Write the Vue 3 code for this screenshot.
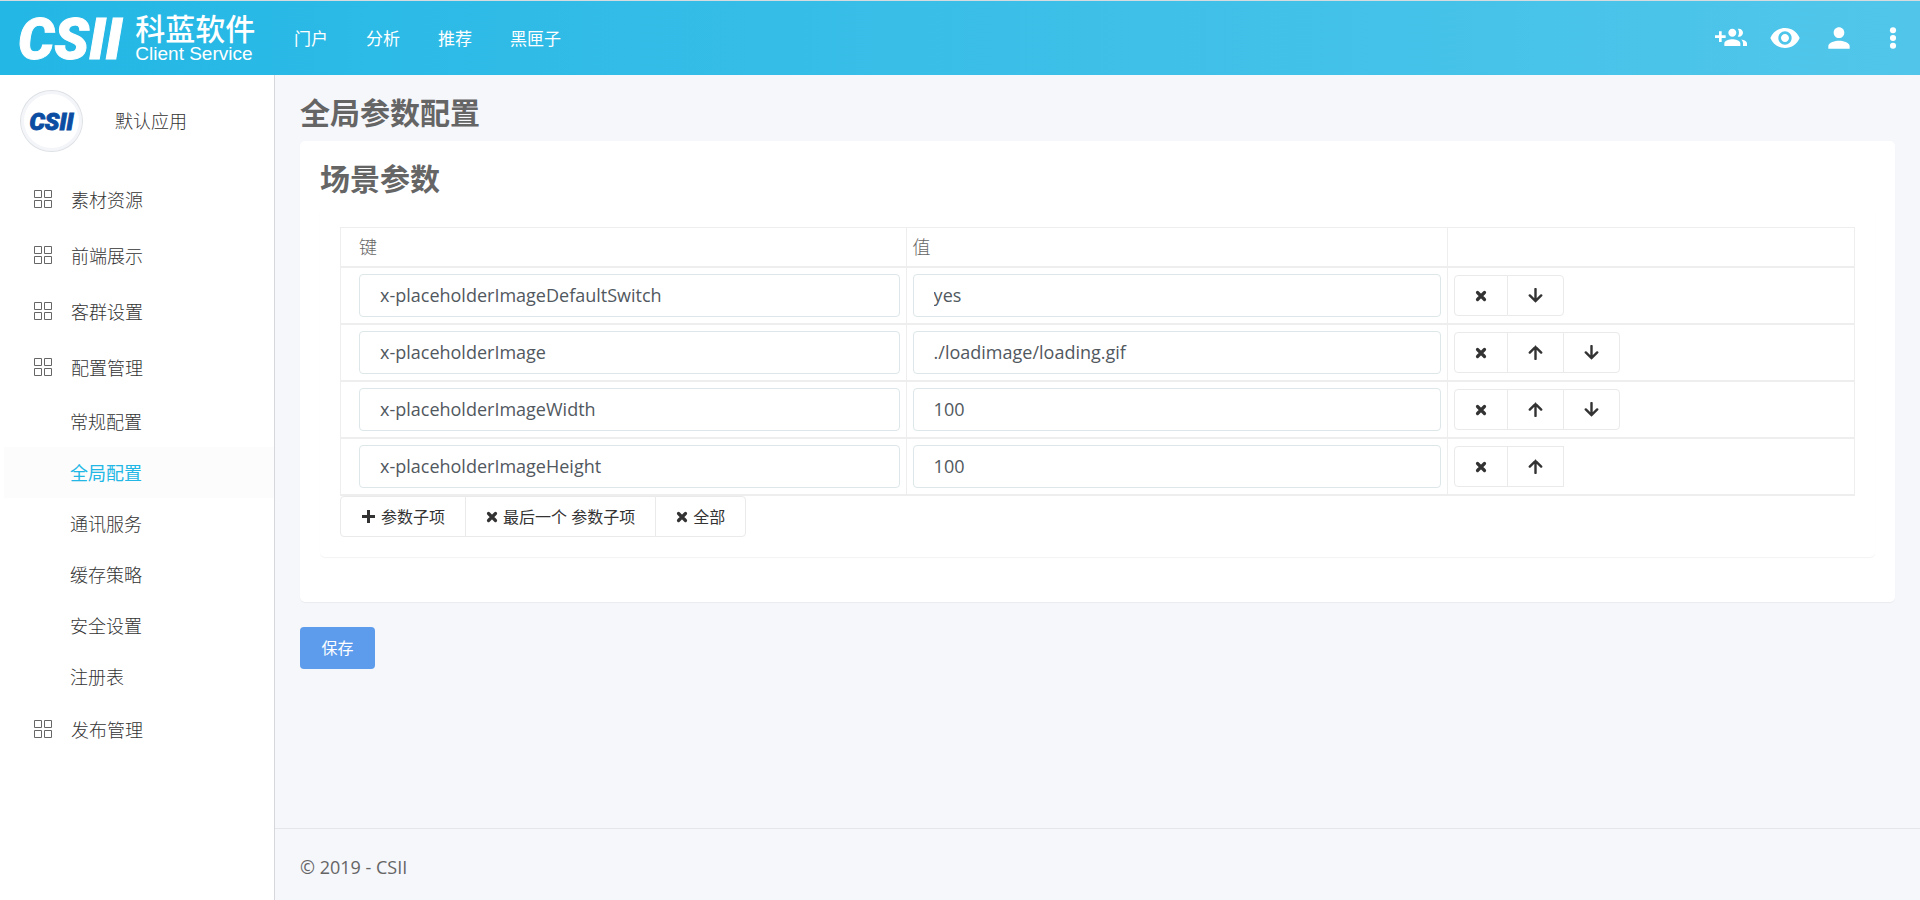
<script setup>
import { ref } from 'vue'

const navLinks = ['门户', '分析', '推荐', '黑匣子']

const menu = [
  { name: '素材资源' },
  { name: '前端展示' },
  { name: '客群设置' },
  {
    name: '配置管理',
    children: ['常规配置', '全局配置', '通讯服务', '缓存策略', '安全设置', '注册表']
  },
  { name: '发布管理' }
]
const current = ref('全局配置')

const rows = ref([
  { key: 'x-placeholderImageDefaultSwitch', value: 'yes' },
  { key: 'x-placeholderImage', value: './loadimage/loading.gif' },
  { key: 'x-placeholderImageWidth', value: '100' },
  { key: 'x-placeholderImageHeight', value: '100' }
])

function removeRow(i) {
  rows.value.splice(i, 1)
}
function moveRow(i, step) {
  const [row] = rows.value.splice(i, 1)
  rows.value.splice(i + step, 0, row)
}
function addRow() {
  rows.value.push({ key: '', value: '' })
}
</script>

<template>
  <div class="app">
    <header class="topbar">
      <a href="#" class="brand">
        <span class="mark">CSII</span>
        <span class="brand-text">
          <span class="brand-cn">科蓝软件</span>
          <span class="brand-en">Client Service</span>
        </span>
      </a>
      <nav class="topnav">
        <a v-for="link in navLinks" :key="link" href="#">{{ link }}</a>
      </nav>
      <div class="actions">
        <button type="button" aria-label="添加用户">
          <svg viewBox="0 0 24 24"><path d="M8 10H5V7H3v3H0v2h3v3h2v-3h3v-2zm10 1c1.66 0 2.99-1.34 2.99-3S19.66 5 18 5c-.32 0-.63.05-.91.14.57.81.9 1.79.9 2.86s-.34 2.04-.9 2.86c.28.09.59.14.91.14zm-5 0c1.66 0 2.99-1.34 2.99-3S14.66 5 13 5c-1.66 0-3 1.34-3 3s1.34 3 3 3zm6.62 2.16c.83.73 1.38 1.66 1.38 2.84v2h3v-2c0-1.54-2.37-2.49-4.38-2.84zM13 13c-2 0-6 1-6 3v2h12v-2c0-2-4-3-6-3z" /></svg>
        </button>
        <button type="button" aria-label="预览">
          <svg viewBox="0 0 24 24"><path d="M12 4.500C7 4.500 2.730 7.610 1 12c1.730 4.390 6 7.500 11 7.500s9.270-3.110 11-7.500c-1.730-4.390-6-7.500-11-7.500zM12 17c-2.760 0-5-2.240-5-5s2.240-5 5-5 5 2.240 5 5-2.240 5-5 5zm0-8c-1.660 0-3 1.340-3 3s1.340 3 3 3 3-1.340 3-3-1.340-3-3-3z" /></svg>
        </button>
        <button type="button" aria-label="账户">
          <svg viewBox="0 0 24 24"><path d="M12 12c2.210 0 4-1.790 4-4s-1.790-4-4-4-4 1.790-4 4 1.790 4 4 4zm0 2c-2.670 0-8 1.340-8 4v2h16v-2c0-2.660-5.330-4-8-4z" /></svg>
        </button>
        <button type="button" aria-label="更多">
          <svg viewBox="0 0 24 24"><circle cx="12" cy="6.200" r="2.300" /><circle cx="12" cy="12" r="2.300" /><circle cx="12" cy="17.800" r="2.300" /></svg>
        </button>
      </div>
    </header>

    <div class="body">
      <aside class="sidebar">
        <div class="profile">
          <span class="avatar"><span class="avatar-mark">CSII</span></span>
          <span>默认应用</span>
        </div>
        <ul class="menu">
          <li v-for="item in menu" :key="item.name">
            <a href="#" class="item">
              <svg viewBox="0 0 18 18" aria-hidden="true">
                <path d="M.5 .5h7v7h-7zM10.500 .5h7v7h-7zM.5 10.500h7v7h-7zM10.500 10.500h7v7h-7z" />
              </svg>
              <span>{{ item.name }}</span>
            </a>
            <ul v-if="item.children" class="submenu">
              <li v-for="child in item.children" :key="child">
                <a href="#" :class="{ active: child === current }" @click.prevent="current = child">{{ child }}</a>
              </li>
            </ul>
          </li>
        </ul>
      </aside>

      <div class="content">
        <main>
          <h2>全局参数配置</h2>
          <section class="card">
            <h2>场景参数</h2>
            <div class="panel">
              <table>
                <thead>
                  <tr>
                    <th class="col-key">键</th>
                    <th class="col-value">值</th>
                    <th></th>
                  </tr>
                </thead>
                <tbody>
                  <tr v-for="(row, i) in rows" :key="i">
                    <td><input v-model="row.key" type="text" aria-label="键" /></td>
                    <td><input v-model="row.value" type="text" aria-label="值" /></td>
                    <td>
                      <div class="group" :class="{ open: i === rows.length - 1 }">
                        <button type="button" aria-label="删除" @click="removeRow(i)">
                          <svg class="cross" viewBox="0 0 12 14"><path d="M2.500 3.500l7 7M9.500 3.500l-7 7" /></svg>
                        </button>
                        <button v-if="i > 0" type="button" aria-label="上移" @click="moveRow(i, -1)">
                          <svg class="arrow" viewBox="0 0 15 15"><path d="M7.500 14V2M1.800 7.600l5.700-5.700 5.700 5.700" /></svg>
                        </button>
                        <button v-if="i < rows.length - 1" type="button" aria-label="下移" @click="moveRow(i, 1)">
                          <svg class="arrow" viewBox="0 0 15 15"><path d="M7.500 1v12M1.800 7.400l5.700 5.700 5.700-5.700" /></svg>
                        </button>
                      </div>
                    </td>
                  </tr>
                </tbody>
              </table>
              <div class="group">
                <button type="button" @click="addRow">
                  <svg class="plus" viewBox="0 0 15 15"><path d="M7.500 1v13M1 7.500h13" /></svg>
                  <span>参数子项</span>
                </button>
                <button type="button" @click="rows.pop()">
                  <svg class="cross" viewBox="0 0 12 14"><path d="M2.500 3.500l7 7M9.500 3.500l-7 7" /></svg>
                  <span>最后一个 参数子项</span>
                </button>
                <button type="button" @click="rows = []">
                  <svg class="cross" viewBox="0 0 12 14"><path d="M2.500 3.500l7 7M9.500 3.500l-7 7" /></svg>
                  <span>全部</span>
                </button>
              </div>
            </div>
          </section>
          <button type="button" class="save">保存</button>
        </main>
        <footer>© 2019 - CSII</footer>
      </div>
    </div>
  </div>
</template>

<style>
body {
  margin: 0;
  background: #f5f7fb;
}
</style>

<style scoped>
.app {
  display: flex;
  flex-direction: column;
  min-height: 100vh;
  box-sizing: border-box;
  font-family: "Open Sans", "Noto Sans CJK SC", sans-serif;
  font-size: 18px;
  line-height: 24px;
  color: #656565;
}
a {
  color: inherit;
  text-decoration: none;
}
button {
  font: inherit;
  color: inherit;
  cursor: pointer;
}
ul {
  list-style: none;
  margin: 0;
  padding: 0;
}

/* top bar */
.topbar {
  display: flex;
  align-items: center;
  height: 74px;
  border-top: 1px solid #d5dbde;
  background: linear-gradient(to right, #23b7e5, #51c6ea);
  color: #fff;
}
.brand {
  display: flex;
  align-items: center;
  gap: 13px;
  width: 294px;
  padding-left: 18px;
  box-sizing: border-box;
}
.mark,
.avatar-mark {
  padding-top: 3px;
  font-family: Roboto, "Liberation Sans", sans-serif;
  font-weight: 900;
  font-style: italic;
}
.mark {
  font-size: 57px;
  line-height: 71px;
  -webkit-text-stroke: 1px #fff;
}
.brand-text {
  display: flex;
  flex-direction: column;
  white-space: nowrap;
}
.brand-cn {
  font-size: 30px;
  line-height: 32px;
  font-weight: 500;
}
.brand-en {
  font-family: "Liberation Sans", sans-serif;
  font-size: 19px;
  line-height: 18px;
}
.topnav {
  display: flex;
  gap: 38px;
  padding-top: 2px;
  font-size: 17px;
}
.actions {
  display: flex;
  gap: 22px;
  margin-left: auto;
  padding-right: 11px;
}
.actions button {
  padding: 0;
  border: 0;
  background: none;
}
.actions svg {
  display: block;
  width: 32px;
  height: 32px;
  fill: #fff;
}

/* sidebar */
.body {
  display: flex;
  flex: 1;
}
.sidebar {
  flex: none;
  width: 274px;
  border-right: 1px solid #d6d7dc;
  background: #fff;
  font-weight: 300;
  color: #333;
}
.profile {
  display: flex;
  align-items: center;
  gap: 32px;
  height: 91px;
  padding: 0 20px 6px;
}
.avatar {
  display: flex;
  align-items: center;
  justify-content: center;
  width: 63px;
  height: 62px;
  box-sizing: border-box;
  border: 1px solid #dde1e5;
  border-radius: 50%;
  box-shadow: inset 0 0 0 3px #f3f5f9;
}
.avatar-mark {
  font-size: 24px;
  color: #0b4da2;
  -webkit-text-stroke: 1px #0b4da2;
}
.item {
  display: flex;
  align-items: center;
  gap: 19px;
  height: 56px;
  padding-left: 34px;
}
.item svg {
  width: 18px;
  height: 18px;
  margin-bottom: 2px;
  fill: none;
  stroke: #666;
}
.submenu a {
  display: block;
  margin-left: 4px;
  padding: 2px 0 0 66px;
  line-height: 49px;
}
.submenu .active {
  background: #fcfcfc;
  font-weight: 400;
  color: #23b7e5;
}

/* content */
.content {
  display: flex;
  flex-direction: column;
  flex: 1;
  min-width: 0;
  background: #f5f7fb;
}
main {
  flex: 1;
  padding: 20px 25px;
}
h2 {
  margin: 0;
  font-size: 30px;
  line-height: 36px;
  font-weight: 700;
}
.card {
  margin: 10px 0 25px;
  padding: 20px 20px 45px;
  border-radius: 5px;
  background: #fff;
  box-shadow: 0 1px 1px rgba(0, 0, 0, 0.05);
}
.panel {
  margin-top: 10px;
  padding: 20px;
  border-radius: 5px;
  box-shadow: 0 1px 1px rgba(0, 0, 0, 0.05);
}
table {
  width: 100%;
  table-layout: fixed;
  border-collapse: separate;
  border-spacing: 0;
}
th,
td {
  padding: 6px;
  border-right: 1px solid #eee;
  border-bottom: 2px solid #eee;
  text-align: left;
}
th {
  padding: 7px 6px;
  border-top: 1px solid #eee;
  font-weight: 300;
}
th:first-child,
td:first-child {
  padding-left: 18px;
  border-left: 1px solid #eee;
}
.col-key {
  width: 37.4%;
  box-sizing: border-box;
}
.col-value {
  width: 35.75%;
  box-sizing: border-box;
}
input {
  display: block;
  width: 100%;
  height: 43px;
  box-sizing: border-box;
  padding: 0 20px 2px;
  border: 1px solid #dde6e9;
  border-radius: 4px;
  background: #fff;
  font: inherit;
  color: #515860;
}
.group {
  display: flex;
}
.group button {
  display: flex;
  align-items: center;
  gap: 5px;
  height: 41px;
  padding: 0 20px;
  border: 1px solid #eaeaea;
  background: #fff;
  font-size: 16px;
  color: #333;
}
.group button + button {
  margin-left: -1px;
}
.group button:first-child {
  border-radius: 4px 0 0 4px;
}
.group button:last-child {
  border-radius: 0 4px 4px 0;
}
.group.open button:last-child {
  border-radius: 0;
}
.group svg {
  fill: none;
  stroke: #333;
  stroke-width: 3;
}
.plus,
.arrow {
  width: 15px;
  height: 15px;
}
.cross {
  width: 12px;
  height: 14px;
}
.group .arrow {
  stroke-width: 2.4;
  stroke-linecap: round;
}
.group .cross {
  stroke-width: 3.2;
  stroke-linecap: round;
}
.save {
  display: block;
  min-width: 75px;
  height: 42px;
  padding: 0 20px;
  border: 0;
  border-radius: 4px;
  background: #5d9cec;
  font-size: 16px;
  color: #fff;
}
footer {
  padding: 26px 25px 21px;
  border-top: 1px solid #e4e7ea;
}
</style>
